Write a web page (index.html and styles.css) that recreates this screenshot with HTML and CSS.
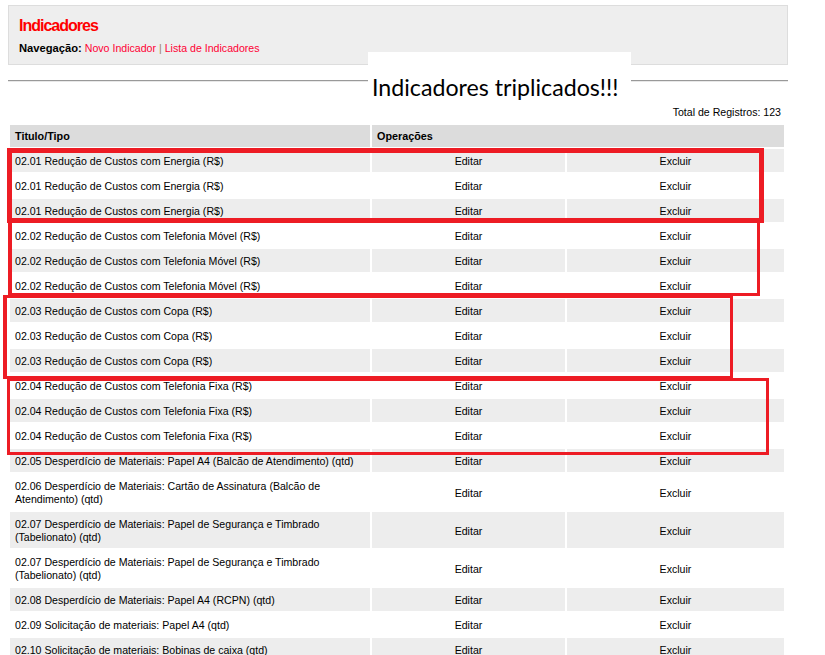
FILE: index.html
```html
<!DOCTYPE html>
<html lang="pt-BR">
<head>
<meta charset="utf-8">
<title>Indicadores</title>
<link rel="stylesheet" href="styles.css">
</head>
<body>
<div class="header">
  <h1 class="title">Indicadores</h1>
  <div class="nav"><b class="nav-label">Navegação:</b> <a class="nav-link" href="#">Novo Indicador</a> <span class="sep">|</span> <a class="nav-link" href="#">Lista de Indicadores</a></div>
</div>
<hr class="rule">
<div class="total">Total de Registros: 123</div>
<table class="grid">
  <colgroup><col class="c1"><col class="c2"><col class="c3"></colgroup>
  <thead>
    <tr><th>Titulo/Tipo</th><th colspan="2">Operações</th></tr>
  </thead>
  <tbody>
    <tr><td>02.01 Redução de Custos com Energia (R$)</td><td class="op">Editar</td><td class="op">Excluir</td></tr>
    <tr><td>02.01 Redução de Custos com Energia (R$)</td><td class="op">Editar</td><td class="op">Excluir</td></tr>
    <tr><td>02.01 Redução de Custos com Energia (R$)</td><td class="op">Editar</td><td class="op">Excluir</td></tr>
    <tr><td>02.02 Redução de Custos com Telefonia Móvel (R$)</td><td class="op">Editar</td><td class="op">Excluir</td></tr>
    <tr><td>02.02 Redução de Custos com Telefonia Móvel (R$)</td><td class="op">Editar</td><td class="op">Excluir</td></tr>
    <tr><td>02.02 Redução de Custos com Telefonia Móvel (R$)</td><td class="op">Editar</td><td class="op">Excluir</td></tr>
    <tr><td>02.03 Redução de Custos com Copa (R$)</td><td class="op">Editar</td><td class="op">Excluir</td></tr>
    <tr><td>02.03 Redução de Custos com Copa (R$)</td><td class="op">Editar</td><td class="op">Excluir</td></tr>
    <tr><td>02.03 Redução de Custos com Copa (R$)</td><td class="op">Editar</td><td class="op">Excluir</td></tr>
    <tr><td>02.04 Redução de Custos com Telefonia Fixa (R$)</td><td class="op">Editar</td><td class="op">Excluir</td></tr>
    <tr><td>02.04 Redução de Custos com Telefonia Fixa (R$)</td><td class="op">Editar</td><td class="op">Excluir</td></tr>
    <tr><td>02.04 Redução de Custos com Telefonia Fixa (R$)</td><td class="op">Editar</td><td class="op">Excluir</td></tr>
    <tr><td>02.05 Desperdício de Materiais: Papel A4 (Balcão de Atendimento) (qtd)</td><td class="op">Editar</td><td class="op">Excluir</td></tr>
    <tr><td>02.06 Desperdício de Materiais: Cartão de Assinatura (Balcão de Atendimento) (qtd)</td><td class="op">Editar</td><td class="op">Excluir</td></tr>
    <tr><td>02.07 Desperdício de Materiais: Papel de Segurança e Timbrado (Tabelionato) (qtd)</td><td class="op">Editar</td><td class="op">Excluir</td></tr>
    <tr><td>02.07 Desperdício de Materiais: Papel de Segurança e Timbrado (Tabelionato) (qtd)</td><td class="op">Editar</td><td class="op">Excluir</td></tr>
    <tr><td>02.08 Desperdício de Materiais: Papel A4 (RCPN) (qtd)</td><td class="op">Editar</td><td class="op">Excluir</td></tr>
    <tr><td>02.09 Solicitação de materiais: Papel A4 (qtd)</td><td class="op">Editar</td><td class="op">Excluir</td></tr>
    <tr><td>02.10 Solicitação de materiais: Bobinas de caixa (qtd)</td><td class="op">Editar</td><td class="op">Excluir</td></tr>
  </tbody>
</table>

<div class="callout">Indicadores triplicados!!!</div>
<div class="mark mark-1"></div>
<div class="mark mark-2"></div>
<div class="mark mark-3"></div>
<div class="mark mark-4"></div>
</body>
</html>
```
FILE: styles.css
```css
html, body {
  background: #fff;
}
body {
  margin: 0;
  padding: 5px 0 0 8px;
  position: relative;
  font-family: "Liberation Sans", Arial, sans-serif;
  font-size: 10.6px;
  color: #000;
  overflow: hidden;
}
.header {
  box-sizing: border-box;
  width: 780px;
  background: #eee;
  border: 1px solid #ddd;
  padding: 10px 10px 9px;
}
.title {
  margin: 0;
  font-family: "Liberation Sans", Arial, sans-serif;
  font-weight: bold;
  font-size: 16px;
  line-height: 20px;
  letter-spacing: -1px;
  color: #ff0000;
}
.nav {
  margin-top: 6px;
  line-height: 13px;
}
.nav-label {
  font-size: 11.2px;
  color: #000;
}
.nav-link {
  color: #ff0033;
  text-decoration: none;
}
.sep {
  color: #a08060;
}
.rule {
  width: 780px;
  margin: 15px 0 0;
  height: 0;
  border: 0;
  border-top: 1px solid #999;
  border-bottom: 1px solid #e8e8e8;
}
.total {
  width: 773px;
  margin-top: 24px;
  line-height: 13px;
  text-align: right;
}
.grid {
  margin-top: 4px;
  border-spacing: 2px;
  table-layout: fixed;
  width: 778px;
}
.c1 { width: 360px; }
.c2 { width: 193px; }
.c3 { width: 217px; }
.grid th {
  background: #dcdcdc;
  text-align: left;
  font-weight: bold;
  font-size: 10.8px;
  line-height: 13px;
  padding: 5px 5px 4px;
}
.grid td {
  padding: 6px 5px 4px;
  line-height: 13px;
  vertical-align: middle;
}
.grid tbody tr:nth-child(odd) td {
  background: #ededed;
}
.grid td.op {
  text-align: center;
}
.callout {
  position: absolute;
  left: 368px;
  top: 52px;
  width: 259px;
  height: 26px;
  padding: 22px 0 0 4px;
  background: #fff;
  font-family: Lato, "Open Sans", sans-serif;
  font-size: 23.2px;
  line-height: 26px;
  color: #000;
  white-space: nowrap;
}
.mark {
  position: absolute;
  box-sizing: border-box;
  border: 3px solid #ed1c24;
}
.mark-1 {
  left: 7px;
  top: 148px;
  width: 757px;
  height: 75px;
  border-width: 5px;
}
.mark-2 {
  left: 8px;
  top: 220px;
  width: 752px;
  height: 76px;
  border-left-width: 4px;
}
.mark-3 {
  left: 3px;
  top: 295px;
  width: 730px;
  height: 84px;
  border-left-width: 4px;
}
.mark-4 {
  left: 7px;
  top: 378px;
  width: 762px;
  height: 77px;
}
```
